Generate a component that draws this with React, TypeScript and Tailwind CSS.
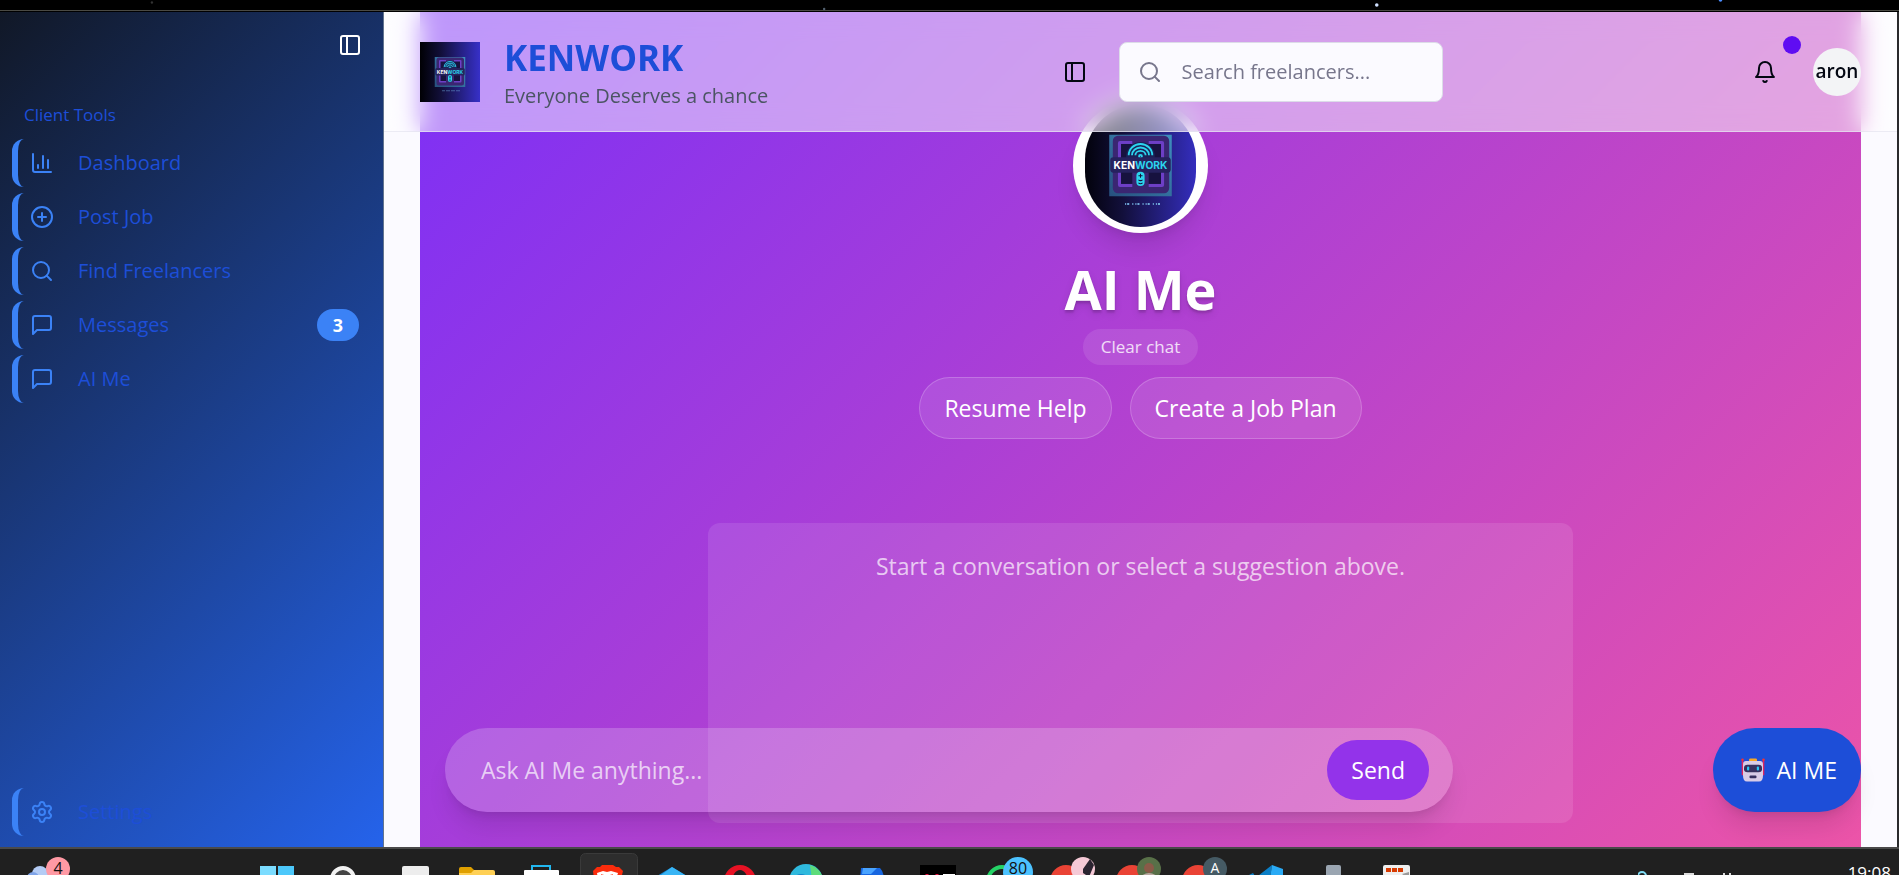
import type { ReactNode } from "react";
import { ChartColumn, CirclePlus, PanelLeft, Search, Settings } from "lucide-react";

type IconProps = { className?: string };

function MessageIcon({ className }: IconProps) {
  return (
    <svg viewBox="0 0 24 24" fill="none" stroke="currentColor" strokeWidth="2" strokeLinecap="round" strokeLinejoin="round" className={className}>
      <path d="M21 15a2 2 0 0 1-2 2H7l-4 4V5a2 2 0 0 1 2-2h14a2 2 0 0 1 2 2z" />
    </svg>
  );
}

function BellIcon({ className }: IconProps) {
  return (
    <svg viewBox="0 0 24 24" fill="none" stroke="currentColor" strokeWidth="2" strokeLinecap="round" strokeLinejoin="round" className={className}>
      <path d="M6 8a6 6 0 0 1 12 0c0 7 3 9 3 9H3s3-2 3-9" />
      <path d="M10.3 21a1.94 1.94 0 0 0 3.4 0" />
    </svg>
  );
}

function KenworkLogo({ id, className }: { id: string; className?: string }) {
  return (
    <svg viewBox="0 0 120 120" preserveAspectRatio="xMidYMid slice" className={className} role="img" aria-label="Kenwork">
      <defs>
        <linearGradient id={id} x1="0" x2="1" y1="0" y2="0">
          <stop offset="0" stopColor="#000004" />
          <stop offset="0.35" stopColor="#120f3a" />
          <stop offset="1" stopColor="#3730c8" />
        </linearGradient>
        <linearGradient id={`${id}-edge`} x1="0" x2="1" y1="1" y2="0">
          <stop offset="0" stopColor="#27507e" />
          <stop offset="1" stopColor="#3f8fbe" />
        </linearGradient>
      </defs>
      <rect width="120" height="120" fill={`url(#${id})`} />
      <rect x="29.500" y="30" width="61" height="60" fill={`url(#${id}-edge)`} />
      <rect x="33" y="31" width="55" height="56" rx="5" fill="#3a2672" />
      <rect x="38" y="36" width="45" height="45" rx="2" fill="#6d3fc6" />
      <rect x="41" y="39" width="39" height="39" fill="#17123f" />
      <path d="M52 35h16v47H52z" fill="#3a2672" />
      <circle cx="60" cy="51" r="14" fill="#1b2257" />
      <g fill="none" stroke="#2bd5ee" strokeWidth="1.8">
        <path d="M48.500 50a11.500 11 0 0 1 23 0" />
        <path d="M51.700 50a8.300 7.600 0 0 1 16.600 0" />
        <path d="M55 50a5 4.300 0 0 1 10 0" />
        <circle cx="60" cy="51" r="1.400" />
      </g>
      <rect x="30.500" y="52" width="59" height="15" rx="3" fill="#26225e" />
      <text x="60" y="63" textAnchor="middle" fontFamily="Inter, sans-serif" fontWeight="700" fontSize="10" fill="#ffffff">
        KEN<tspan fill="#2bd5ee">WORK</tspan>
      </text>
      <rect x="56" y="66" width="8" height="14" rx="4" fill="#2bd5ee" />
      <path d="M58 70h4M60 68v4M58 74q2 1.500 4 0M58 77q2 1.500 4 0" fill="none" stroke="#17123f" strokeWidth="1" />
      <path d="M45 97.500h35" stroke="#6fa8d8" strokeWidth="2" strokeDasharray="1 1 2 3 1 2" />
    </svg>
  );
}

function RobotIcon({ className }: IconProps) {
  return (
    <svg viewBox="0 0 24 28" preserveAspectRatio="none" className={className} aria-hidden="true">
      <path d="M1.500 2v18M22.500 2v18" stroke="#e0245e" strokeWidth="1.600" />
      <circle cx="1.500" cy="2" r="1.300" fill="#f8312f" />
      <circle cx="22.500" cy="2" r="1.300" fill="#f8312f" />
      <rect x="8" y="0.500" width="8" height="4" rx="1.500" fill="#f9a825" />
      <path d="M5 3.500h14q3 0 3 4v13q0 7-4 7H6q-4 0-4-7v-13q0-4 3-4z" fill="#d9cbe6" />
      <rect x="3" y="8" width="18" height="8.500" rx="3.500" fill="#37305e" />
      <rect x="6" y="10" width="2.200" height="4.500" rx="1" fill="#26c6f5" />
      <rect x="15.800" y="10" width="2.200" height="4.500" rx="1" fill="#26c6f5" />
      <rect x="8.500" y="20.500" width="7" height="3" rx="1" fill="#37305e" />
    </svg>
  );
}

function NavItem({ icon, label, badge }: { icon: ReactNode; label: string; badge?: string }) {
  return (
    <a href="#" className="flex h-12 items-center rounded-xl border-l-6 border-[#3b82f6] pr-3 pl-3 text-[#3b82f6]">
      {icon}
      <span className="ml-6 flex-1 text-[20px] font-medium text-[#1d4ed8]">{label}</span>
      {badge && (
        <span className="flex h-8 w-[42px] items-center justify-center rounded-full bg-[#3b82f6] text-[18px] font-bold text-white">{badge}</span>
      )}
    </a>
  );
}

const taskIcons: { name: string; active?: boolean; art: ReactNode }[] = [
  { name: "Start", art: <><path d="M16 17h16v11H16z" fill="#7bdcff" /><path d="M34 17h16v11H34z" fill="#4cc8fb" /></> },
  { name: "Search", art: <circle cx="33" cy="30" r="11" fill="#444" stroke="#f2f2f2" strokeWidth="4" /> },
  { name: "Task view", art: <rect x="26" y="17" width="27" height="14" rx="2" fill="#ededed" /> },
  { name: "Files", art: <><path d="M17 20q0-2 2-2h10l4 4v8H17z" fill="#e0a000" /><path d="M17 24h12l3-3h19q2 0 2 2v8H17z" fill="#ffd055" /></> },
  { name: "Store", art: <><path d="M24 23v-6h18v6" fill="none" stroke="#22b8f0" strokeWidth="2" /><rect x="16" y="21" width="35" height="10" rx="1" fill="#fff" /></> },
  { name: "Brave", active: true, art: <><path d="M19 22l4-4 3 0 2-2h11l3 2 3 0 4 4-2 8H20z" fill="#fb2c0c" /><path d="M23 24l6-2 4 1 4-1 7 2-2 6H24z" fill="#fff" /><path d="M27 26l4 1M39 26l-4 1" stroke="#fb2c0c" strokeWidth="1.500" /></> },
  { name: "Photos", art: <><path d="M32 18l15 9v4H17v-4z" fill="#1388d8" /><path d="M32 18l13 8H21z" fill="#39b5f5" /></> },
  { name: "Opera", art: <><circle cx="34" cy="32" r="16" fill="#e81224" /><ellipse cx="34" cy="33" rx="8" ry="12" fill="#202020" /></> },
  { name: "Edge", art: <><circle cx="34" cy="32" r="17" fill="#2fb9dd" /><path d="M38 16a17 17 0 0 1 13 15H40z" fill="#5ddc7a" /><circle cx="29" cy="34" r="9" fill="#1683c9" /></> },
  { name: "Mail", art: <><path d="M23 19h19q4 4 4 12H22z" fill="#1766e0" /><path d="M25 19h14l-6 6h-9z" fill="#49a3ff" /></> },
  { name: "Player", art: <><rect x="16" y="16" width="36" height="14" fill="#000" /><path d="M23 28v-3M33 28v-3" stroke="#e81240" strokeWidth="3" /><path d="M39 25h12v2H39z" fill="#fff" /></> },
  { name: "Chat", art: <><circle cx="32" cy="32" r="14" fill="#222" stroke="#25d366" strokeWidth="4" /><circle cx="48" cy="23" r="15" fill="#4cc2ff" /><text x="48" y="25" textAnchor="middle" fontSize="16" fill="#111">80</text></> },
  { name: "Chrome", art: <><circle cx="30" cy="32" r="16" fill="#ea4335" /><circle cx="47" cy="20" r="12" fill="#f5c9d6" /><path d="M47 20l7-10 4 6-5 12-6-4z" fill="#2b2430" /></> },
  { name: "Chrome profile 2", art: <><circle cx="30" cy="32" r="16" fill="#ea4335" /><circle cx="47" cy="20" r="12" fill="#587048" /><circle cx="47" cy="19" r="5" fill="#8a5a48" /><path d="M38 28q9-8 18 0z" fill="#b9a9a0" /></> },
  { name: "Chrome profile 3", art: <><circle cx="30" cy="32" r="16" fill="#ea4335" /><circle cx="47" cy="20" r="12" fill="#455a64" /><text x="47" y="24" textAnchor="middle" fontSize="14" fill="#fff">A</text></> },
  { name: "Code", art: <><path d="M15 26l4-2 4 6h-6z" fill="#0b7fc7" /><path d="M38 16l-18 14h16z" fill="#0b7fc7" /><path d="M38 16l11 4v10H36z" fill="#29aaf5" /></> },
  { name: "Device", art: <rect x="26" y="16" width="15" height="14" rx="2" fill="#9aa5b1" /> },
  { name: "Snip", art: <><rect x="17" y="16" width="27" height="14" rx="2" fill="#eee" /><path d="M20 21h17" stroke="#d83b01" strokeWidth="4" strokeDasharray="5 1" /><path d="M22 26v4" stroke="#d83b01" strokeWidth="3" /><path d="M36 25l7-2v7z" fill="#9a9a9a" /></> },
];

function Taskbar() {
  return (
    <footer className="flex h-7 shrink-0 items-start overflow-hidden border-t-2 border-[#4a4a4a] bg-[#202020]">
      <svg viewBox="0 0 244 26" className="h-[26px] w-[244px] shrink-0" aria-hidden="true">
        <circle cx="40" cy="25" r="8" fill="#b4ccf5" />
        <circle cx="33" cy="29" r="6" fill="#7fa4e8" />
        <circle cx="58" cy="20" r="12" fill="#ff99a4" />
        <text x="58" y="25" textAnchor="middle" fontSize="16" fill="#111">4</text>
      </svg>
      {taskIcons.map((t) => (
        <svg key={t.name} viewBox="0 0 66 26" className="h-[26px] w-[66px] shrink-0" aria-hidden="true">
          {t.active && <rect x="6.500" y="4.500" width="57" height="40" rx="5" fill="#2d2d2d" stroke="#3a3a3a" />}
          {t.art}
        </svg>
      ))}
      <div className="ml-auto flex pr-2">
        <svg viewBox="0 0 210 26" className="h-[26px] w-[210px]" fill="none" aria-hidden="true">
          <circle cx="4" cy="27" r="4" stroke="#7fdcf5" strokeWidth="2" />
          <path d="M46 25h10M85 25h2M92 24v2" stroke="#ddd" strokeWidth="2" />
        </svg>
        <span className="pt-3 text-[17px] leading-6 text-white">19:08</span>
      </div>
    </footer>
  );
}

function Sidebar() {
  return (
    <aside className="flex w-96 shrink-0 flex-col border-r border-slate-500 bg-[linear-gradient(135deg,#111827,#2563eb)] p-3 pb-[11px]">
      <div className="flex justify-end pt-[9px] pr-[9px]">
        <button type="button" aria-label="Collapse sidebar" className="text-white">
          <PanelLeft className="size-6" />
        </button>
      </div>
      <h2 className="mt-[34px] flex h-12 items-center pl-3 text-[17px] font-medium text-[#1d4ed8]">Client Tools</h2>
      <nav className="flex flex-1 flex-col gap-1.5">
        <NavItem icon={<ChartColumn className="size-6" />} label="Dashboard" />
        <NavItem icon={<CirclePlus className="size-6" />} label="Post Job" />
        <NavItem icon={<Search className="size-6" />} label="Find Freelancers" />
        <NavItem icon={<MessageIcon className="size-6" />} label="Messages" badge="3" />
        <NavItem icon={<MessageIcon className="size-6" />} label="AI Me" />
      </nav>
      <NavItem icon={<Settings className="size-6" />} label="Settings" />
    </aside>
  );
}

function Header() {
  return (
    <header className="absolute inset-x-0 top-0 z-10 flex h-30 items-center justify-between border-b border-[#e4e4f0]/70 bg-white/50 px-9 backdrop-blur-md">
      <div className="flex items-center gap-6">
        <KenworkLogo id="logo-header" className="size-15" />
        <div className="pt-2">
          <h1 className="text-[35px] leading-10 font-bold text-[#1d4ed8]">KENWORK</h1>
          <p className="text-[20px] leading-9 text-[#4b5563]">Everyone Deserves a chance</p>
        </div>
      </div>
      <div className="flex items-center gap-8">
        <button type="button" aria-label="Toggle sidebar" className="text-gray-950">
          <PanelLeft className="size-6" />
        </button>
        <label className="flex h-15 w-[324px] items-center gap-4 rounded-lg border border-[#dcdce8] bg-[#fbfaff] px-[18px] text-[#77768c]">
          <Search className="size-6 shrink-0" />
          <input type="search" aria-label="Search freelancers" placeholder="Search freelancers..." className="w-full min-w-0 bg-transparent pl-1 text-[20px] outline-none placeholder:text-[#77768c]" />
        </label>
      </div>
      <div className="flex items-center gap-9">
        <button type="button" aria-label="Notifications" className="relative pl-4 text-gray-950">
          <BellIcon className="size-6" />
          <span className="absolute -top-6 -right-6 size-[18px] rounded-full bg-[#5f0df2]" />
        </button>
        <div className="flex size-12 items-center justify-center rounded-full bg-[#f3f4f6] text-[19px] font-semibold text-gray-950">aron</div>
      </div>
    </header>
  );
}

function Assistant() {
  return (
    <section className="flex min-h-full flex-1 flex-col items-center bg-[linear-gradient(135deg,#7b2ff7,#ec54a8)] pt-[86px] text-white">
      <div className="size-[135px] overflow-hidden rounded-full bg-white px-3 py-1.5 shadow-xl">
        <KenworkLogo id="logo-avatar" className="size-full rounded-full" />
      </div>
      <h2 className="mt-[26px] text-[54px] leading-[60px] font-bold text-shadow-lg">AI Me</h2>
      <button type="button" className="mt-2.5 h-9 rounded-full bg-white/10 px-[18px] text-[17px] text-white/80">Clear chat</button>
      <div className="mt-3 flex gap-[18px]">
        <button type="button" className="h-[62px] rounded-full border border-white/20 bg-white/10 px-6 text-[23px]">Resume Help</button>
        <button type="button" className="h-[62px] rounded-full border border-white/20 bg-white/10 px-6 text-[23px]">Create a Job Plan</button>
      </div>
      <div className="mt-[84px] h-[300px] w-3/5 rounded-xl bg-white/10 pt-[25px] text-center text-[23px] leading-9 text-white/70">
        Start a conversation or select a suggestion above.
      </div>
    </section>
  );
}

export default function App() {
  return (
    <div className="flex h-screen flex-col overflow-hidden bg-black font-['Open_Sans','Noto_Sans',sans-serif]">
      <div className="h-3 shrink-0">
        <svg className="h-3 w-full" aria-hidden="true">
          <rect y="10" width="100%" height="1" fill="#4a4a44" />
          <circle cx="72.500%" cy="5" r="1.800" fill="#cfe0ff" />
          <circle cx="90.600%" cy="0" r="1.800" fill="#4c8dff" />
          <circle cx="43.400%" cy="9" r="1.200" fill="#51606e" />
          <circle cx="8%" cy="2.500" r="1.200" fill="#333" />
        </svg>
      </div>
      <div className="flex min-h-0 flex-1 border-r-2 border-[#2a2a2c]">
        <Sidebar />
        <main className="relative flex min-w-0 flex-1 bg-[#fbfaff] px-9">
          <Header />
          <Assistant />
          <div className="absolute inset-x-9 bottom-[35px] flex items-center justify-between pl-[25px]">
            <form className="flex h-21 w-[1008px] items-center rounded-full bg-white/20 pr-6 pl-9 shadow-xl" onSubmit={(e) => e.preventDefault()}>
              <input type="text" aria-label="Message" placeholder="Ask AI Me anything..." className="min-w-0 flex-1 bg-transparent text-[23px] text-white outline-none placeholder:text-white/70" />
              <button type="submit" className="h-15 rounded-full bg-[#9333ea] px-6 text-[23px] text-white">Send</button>
            </form>
            <button type="button" className="flex h-21 items-center gap-3 rounded-full bg-[#1d4ed8] pr-6 pl-7 text-[23px] text-white shadow-xl">
              <RobotIcon className="size-6" />
              AI ME
            </button>
          </div>
        </main>
      </div>
      <Taskbar />
    </div>
  );
}
